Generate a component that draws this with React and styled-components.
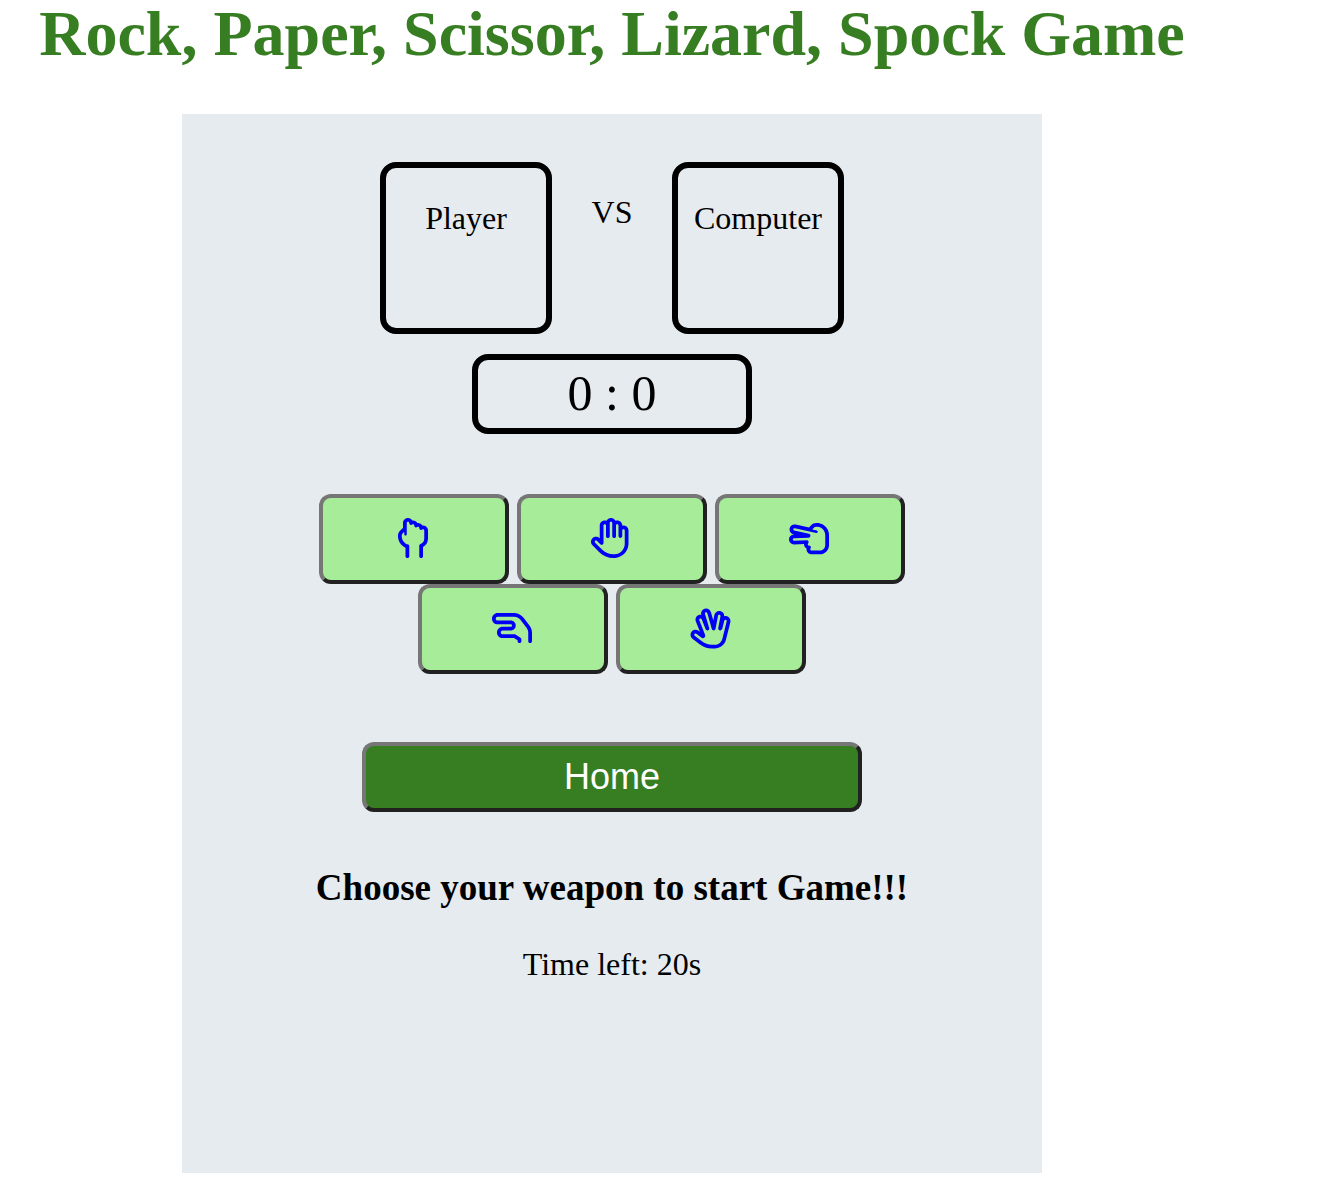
import React from "react";
import styled, { createGlobalStyle } from "styled-components";
import {
  FaRegHandBackFist,
  FaRegHand,
  FaRegHandScissors,
  FaRegHandLizard,
  FaRegHandSpock,
} from "react-icons/fa6";

const GlobalStyle = createGlobalStyle`
  * { box-sizing: border-box; }
  body {
    margin: 0;
    background: #ffffff;
    color: #000000;
    font-family: "Liberation Serif", "Times New Roman", serif;
    font-size: 32px;
    line-height: 36px;
  }
`;

const Page = styled.main`
  max-width: 1224px;
  display: flex;
  flex-direction: column;
  align-items: center;
`;

const Title = styled.h1`
  margin: 0 0 46px;
  color: #377e22;
  font-size: 64px;
  line-height: 68px;
  text-align: center;
`;

const Board = styled.section`
  width: 100%;
  max-width: 860px;
  padding: 48px 40px 189px;
  background: #e6ebf0;
  display: flex;
  flex-direction: column;
  align-items: center;
  text-align: center;
`;

const Versus = styled.div`
  display: flex;
`;

const Fighter = styled.div`
  width: 172px;
  height: 172px;
  padding-top: 32px;
  border: 6px solid #000000;
  border-radius: 16px;
`;

const VersusLabel = styled.div`
  width: 120px;
  padding-top: 32px;
`;

const Score = styled.div`
  width: 280px;
  margin-top: 20px;
  padding-bottom: 2px;
  border: 6px solid #000000;
  border-radius: 16px;
  font-size: 50px;
  line-height: 66px;
`;

const Weapons = styled.div`
  width: 100%;
  max-width: 600px;
  margin: 60px 0 68px;
  display: flex;
  flex-wrap: wrap;
  justify-content: center;
  column-gap: 8px;
`;

const Button = styled.button`
  display: flex;
  align-items: center;
  justify-content: center;
  padding: 0;
  border: 4px solid;
  border-color: #767676 #212121 #212121 #767676;
  border-radius: 12px;
  cursor: pointer;
`;

const WeaponButton = styled(Button)`
  width: 190px;
  height: 90px;
  padding: 0 2px 2px 0;
  background: #a7ed99;
  color: #0000f5;
  font-size: ${({ $iconSize }) => $iconSize}px;
`;

const HomeButton = styled(Button)`
  width: 100%;
  max-width: 500px;
  height: 70px;
  background: #377e22;
  color: #ffffff;
  font-family: "Liberation Sans", Arial, sans-serif;
  font-size: 36px;
`;

const Prompt = styled.h2`
  margin: 56px 0 38px;
  font-size: 37px;
  line-height: 40px;
`;

const Timer = styled.p`
  margin: 0;
  padding-bottom: 2px;
`;

const weapons = [
  { name: "Rock", Icon: FaRegHandBackFist, size: 40 },
  { name: "Paper", Icon: FaRegHand, size: 40 },
  { name: "Scissor", Icon: FaRegHandScissors, size: 40 },
  { name: "Lizard", Icon: FaRegHandLizard, size: 40 },
  { name: "Spock", Icon: FaRegHandSpock, size: 45 },
];

export default function App() {
  return (
    <>
      <GlobalStyle />
      <Page>
        <Title>Rock, Paper, Scissor, Lizard, Spock Game</Title>
        <Board>
          <Versus>
            <Fighter>Player</Fighter>
            <VersusLabel>VS</VersusLabel>
            <Fighter>Computer</Fighter>
          </Versus>
          <Score>0 : 0</Score>
          <Weapons>
            {weapons.map(({ name, Icon, size }) => (
              <WeaponButton
                key={name}
                type="button"
                aria-label={name}
                $iconSize={size}
              >
                <Icon />
              </WeaponButton>
            ))}
          </Weapons>
          <HomeButton type="button">Home</HomeButton>
          <Prompt>Choose your weapon to start Game!!!</Prompt>
          <Timer>Time left: 20s</Timer>
        </Board>
      </Page>
    </>
  );
}
